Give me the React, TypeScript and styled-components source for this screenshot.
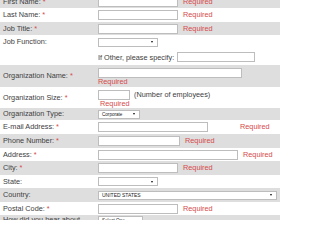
import React from 'react';
import styled, { createGlobalStyle } from 'styled-components';

const GlobalStyle = createGlobalStyle`
  html, body {
    margin: 0;
    padding: 0;
    background: #ffffff;
    height: 220px;
    overflow: hidden;
  }
  body {
    font-family: "Liberation Sans", Arial, sans-serif;
  }
`;

const Page = styled.div`
  height: 220px;
  overflow: hidden;
`;

const Form = styled.div`
  width: 280px;
  margin-top: -5px;
  font-size: 7.3px;
  color: #404040;
`;

const Row = styled.div<{ $h: number; $shade?: boolean; $top?: boolean }>`
  display: grid;
  grid-template-columns: 98px 1fr;
  height: ${p => p.$h}px;
  align-items: ${p => (p.$top ? 'start' : 'center')};
  background: ${p => (p.$shade ? '#dedede' : '#ffffff')};
`;

const Label = styled.div<{ $wrap?: boolean }>`
  padding-left: 3px;
  padding-top: ${p => (p.$wrap ? 1 : 0)}px;
  white-space: ${p => (p.$wrap ? 'normal' : 'nowrap')};
  width: ${p => (p.$wrap ? '86px' : 'auto')};
  line-height: 8px;
`;

const Star = styled.span`
  color: #d64a4a;
  margin-left: 2px;
`;

const Field = styled.div<{ $top?: number }>`
  display: flex;
  align-items: center;
  white-space: nowrap;
  padding-top: ${p => p.$top ?? 0}px;
`;

const Stack = styled.div`
  display: flex;
  flex-direction: column;
  align-items: flex-start;
  padding-top: 2px;
`;

const TextBox = styled.input<{ $w: number }>`
  box-sizing: border-box;
  width: ${p => p.$w}px;
  height: 10px;
  margin: 0;
  padding: 0;
  border: 1px solid #bdbdbd;
  background: #ffffff;
  outline: none;
`;

const Required = styled.span<{ $left?: number }>`
  color: #d64a4a;
  font-size: 7.3px;
  line-height: 8px;
  margin-left: ${p => p.$left ?? 5}px;
`;

const SelectBox = styled.div<{ $w: number; $caps?: boolean }>`
  box-sizing: border-box;
  width: ${p => p.$w}px;
  height: 9px;
  display: flex;
  align-items: center;
  justify-content: space-between;
  padding: 0 4px 0 3px;
  border: 1px solid #bdbdbd;
  background: #ffffff;
  font-size: ${p => (p.$caps ? 5 : 4.6)}px;
  color: #222;
`;

const Arrow = styled.span`
  width: 0;
  height: 0;
  border-left: 1.3px solid transparent;
  border-right: 1.3px solid transparent;
  border-top: 2.4px solid #111;
`;

const Note = styled.span<{ $left?: number }>`
  margin-left: ${p => p.$left ?? 0}px;
  margin-right: 3px;
`;

const Select = ({ w, value, caps }: { w: number; value?: string; caps?: boolean }) => (
  <SelectBox $w={w} $caps={caps}>
    <span>{value}</span>
    <Arrow />
  </SelectBox>
);

const Req = ({ children }: { children: React.ReactNode }) => (
  <Label>
    {children}
    <Star>*</Star>
  </Label>
);

const App: React.FC = () => (
  <Page>
    <GlobalStyle />
    <Form>
      <Row $h={13} $shade>
        <Req>First Name:</Req>
        <Field>
          <TextBox $w={80} />
          <Required>Required</Required>
        </Field>
      </Row>
      <Row $h={14}>
        <Req>Last Name:</Req>
        <Field>
          <TextBox $w={80} />
          <Required>Required</Required>
        </Field>
      </Row>
      <Row $h={13} $shade>
        <Req>Job Title:</Req>
        <Field>
          <TextBox $w={80} />
          <Required>Required</Required>
        </Field>
      </Row>
      <Row $h={14}>
        <Label>Job Function:</Label>
        <Field>
          <Select w={60} />
        </Field>
      </Row>
      <Row $h={16}>
        <span />
        <Field>
          <Note>If Other, please specify:</Note>
          <TextBox $w={78} />
        </Field>
      </Row>
      <Row $h={22} $shade>
        <Req>Organization Name:</Req>
        <Stack>
          <TextBox $w={144} />
          <Required $left={0}>Required</Required>
        </Stack>
      </Row>
      <Row $h={21}>
        <Req>Organization Size:</Req>
        <Stack>
          <Field>
            <TextBox $w={32} />
            <Note $left={4}>(Number of employees)</Note>
          </Field>
          <Required $left={2}>Required</Required>
        </Stack>
      </Row>
      <Row $h={12} $shade>
        <Label>Organization Type:</Label>
        <Field>
          <Select w={42} value="Corporate" />
        </Field>
      </Row>
      <Row $h={14}>
        <Req>E-mail Address:</Req>
        <Field>
          <TextBox $w={110} />
          <Required $left={32}>Required</Required>
        </Field>
      </Row>
      <Row $h={14} $shade>
        <Req>Phone Number:</Req>
        <Field>
          <TextBox $w={82} />
          <Required>Required</Required>
        </Field>
      </Row>
      <Row $h={13}>
        <Req>Address:</Req>
        <Field>
          <TextBox $w={140} />
          <Required>Required</Required>
        </Field>
      </Row>
      <Row $h={14} $shade>
        <Req>City:</Req>
        <Field>
          <TextBox $w={80} />
          <Required>Required</Required>
        </Field>
      </Row>
      <Row $h={13}>
        <Label>State:</Label>
        <Field>
          <Select w={60} />
        </Field>
      </Row>
      <Row $h={14} $shade>
        <Label>Country:</Label>
        <Field>
          <Select w={179} value="UNITED STATES" caps />
        </Field>
      </Row>
      <Row $h={13}>
        <Req>Postal Code:</Req>
        <Field>
          <TextBox $w={80} />
          <Required>Required</Required>
        </Field>
      </Row>
      <Row $h={20} $shade $top>
        <Label $wrap>How did you hear about us?</Label>
        <Field $top={1}>
          <Select w={45} value="Select One" />
        </Field>
      </Row>
    </Form>
  </Page>
);

export default App;
